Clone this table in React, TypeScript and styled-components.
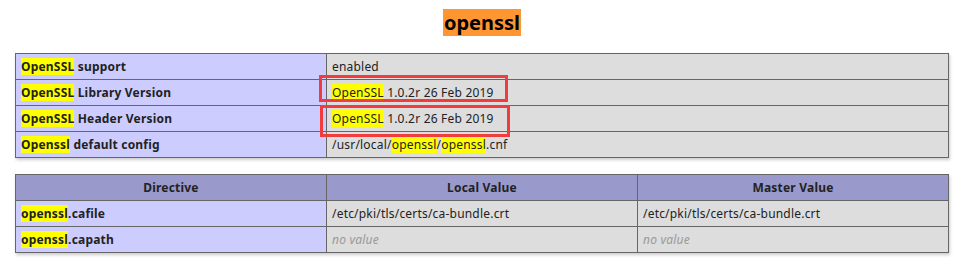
import React from "react";
import styled, { createGlobalStyle } from "styled-components";

const Global = createGlobalStyle`
  html, body { margin: 0; padding: 0; background: #fff; }
  body { color: #222; font-family: "Noto Sans", "Liberation Sans", sans-serif; }
`;

const Page = styled.div`
  position: relative;
  width: 964px;
  padding-top: 9px;
  display: flex;
  flex-direction: column;
  align-items: center;
`;

const Title = styled.h2`
  margin: 0 0 17px;
  font-size: 20px;
  line-height: 27px;
  font-weight: bold;
`;

const ActiveMatch = styled.span`
  background: #ff9632;
  color: #000;
  padding: 0 1px;
`;

const Table = styled.div<{ $cols: number }>`
  display: grid;
  grid-template-columns: ${(p) => (p.$cols === 2 ? "310px 1fr" : "310px 310px 310px")};
  gap: 1px;
  width: 934px;
  box-sizing: border-box;
  border: 1px solid #666;
  background: #666;
  box-shadow: 1px 2px 3px #ccc;
  margin-bottom: 16px;
`;

const Cell = styled.div<{ $kind: "e" | "v" | "h" }>`
  height: 25px;
  line-height: 25px;
  padding: 0 5px;
  font-size: 12px;
  letter-spacing: 0.2px;
  white-space: nowrap;
  overflow: hidden;
  background: ${(p) => (p.$kind === "e" ? "#ccf" : p.$kind === "h" ? "#99c" : "#ddd")};
  font-weight: ${(p) => (p.$kind === "v" ? "normal" : "bold")};
  text-align: ${(p) => (p.$kind === "h" ? "center" : "left")};
`;

const Hit = styled.span`
  background: #ff0;
`;

const NoValue = styled.i`
  color: #999;
`;

const Annotation = styled.div<{ $x: number; $y: number; $w: number; $h: number }>`
  position: absolute;
  left: ${(p) => p.$x}px;
  top: ${(p) => p.$y}px;
  width: ${(p) => p.$w}px;
  height: ${(p) => p.$h}px;
  box-sizing: border-box;
  border: 3px solid #f03c3c;
  pointer-events: none;
`;

export default function App() {
  return (
    <>
      <Global />
      <Page>
        <Title>
          <ActiveMatch>openssl</ActiveMatch>
        </Title>
        <Table $cols={2}>
          <Cell $kind="e"><Hit>OpenSSL</Hit> support</Cell>
          <Cell $kind="v">enabled</Cell>
          <Cell $kind="e"><Hit>OpenSSL</Hit> Library Version</Cell>
          <Cell $kind="v"><Hit>OpenSSL</Hit> 1.0.2r 26 Feb 2019</Cell>
          <Cell $kind="e"><Hit>OpenSSL</Hit> Header Version</Cell>
          <Cell $kind="v"><Hit>OpenSSL</Hit> 1.0.2r 26 Feb 2019</Cell>
          <Cell $kind="e"><Hit>Openssl</Hit> default config</Cell>
          <Cell $kind="v">/usr/local/<Hit>openssl</Hit>/<Hit>openssl</Hit>.cnf</Cell>
        </Table>
        <Table $cols={3}>
          <Cell $kind="h">Directive</Cell>
          <Cell $kind="h">Local Value</Cell>
          <Cell $kind="h">Master Value</Cell>
          <Cell $kind="e"><Hit>openssl</Hit>.cafile</Cell>
          <Cell $kind="v">/etc/pki/tls/certs/ca-bundle.crt</Cell>
          <Cell $kind="v">/etc/pki/tls/certs/ca-bundle.crt</Cell>
          <Cell $kind="e"><Hit>openssl</Hit>.capath</Cell>
          <Cell $kind="v"><NoValue>no value</NoValue></Cell>
          <Cell $kind="v"><NoValue>no value</NoValue></Cell>
        </Table>
        <Annotation $x={319} $y={75} $w={189} $h={27} />
        <Annotation $x={320} $y={105} $w={190} $h={32} />
      </Page>
    </>
  );
}
